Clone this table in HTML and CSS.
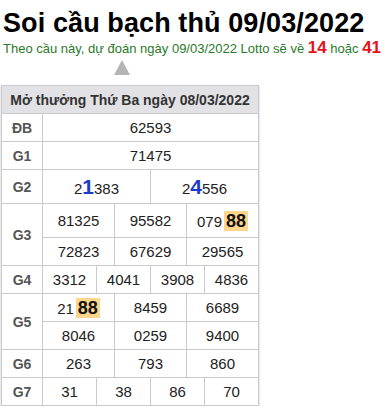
FILE: index.html
```html
<!DOCTYPE html>
<html lang="vi">
<head>
<meta charset="utf-8">
<link rel="stylesheet" href="styles.css">
</head>
<body>
<h1 class="title">Soi cầu bạch thủ 09/03/2022</h1>
<p class="predict">Theo cầu này, dự đoán ngày 09/03/2022 Lotto sẽ về <b class="num">14</b> hoặc <b class="num">41</b></p>
<div class="arrow-wrap"><span class="arrow"></span></div>
<table class="kq">
  <colgroup>
    <col class="c-label">
    <col class="c"><col class="c"><col class="c"><col class="c"><col class="c"><col class="c">
    <col class="c"><col class="c"><col class="c"><col class="c"><col class="c"><col class="c">
  </colgroup>
  <tr><th colspan="13" class="head">Mở thưởng Thứ Ba ngày 08/03/2022</th></tr>
  <tr><td class="lb">ĐB</td><td colspan="12">62593</td></tr>
  <tr><td class="lb">G1</td><td colspan="12">71475</td></tr>
  <tr class="tall"><td class="lb">G2</td><td colspan="6">2<b class="hl-b">1</b>383</td><td colspan="6">2<b class="hl-b">4</b>556</td></tr>
  <tr class="tall"><td class="lb" rowspan="2">G3</td><td colspan="4">81325</td><td colspan="4">95582</td><td colspan="4">079<b class="hl">88</b></td></tr>
  <tr><td colspan="4">72823</td><td colspan="4">67629</td><td colspan="4">29565</td></tr>
  <tr><td class="lb">G4</td><td colspan="3">3312</td><td colspan="3">4041</td><td colspan="3">3908</td><td colspan="3">4836</td></tr>
  <tr><td class="lb" rowspan="2">G5</td><td colspan="4">21<b class="hl">88</b></td><td colspan="4">8459</td><td colspan="4">6689</td></tr>
  <tr><td colspan="4">8046</td><td colspan="4">0259</td><td colspan="4">9400</td></tr>
  <tr><td class="lb">G6</td><td colspan="4">263</td><td colspan="4">793</td><td colspan="4">860</td></tr>
  <tr><td class="lb">G7</td><td colspan="3">31</td><td colspan="3">38</td><td colspan="3">86</td><td colspan="3">70</td></tr>
</table>
</body>
</html>
```
FILE: styles.css
```css
html, body {
  margin: 0;
  padding: 0;
  background: #fff;
}
body {
  font-family: "Liberation Sans", Arial, sans-serif;
  color: #222;
  padding: 0 1px;
}
.title {
  margin: 0;
  padding: 8px 0 0 2px;
  font-size: 27px;
  line-height: 30px;
  font-weight: bold;
  color: #000;
  letter-spacing: 0.1px;
}
.predict {
  margin: 0;
  padding-left: 2px;
  font-size: 13px;
  line-height: 20px;
  color: #2a7a2a;
}
.predict .num {
  color: #e0141e;
  font-size: 17px;
}
.arrow-wrap {
  width: 241px;
  display: flex;
  justify-content: center;
  align-items: flex-start;
  padding-top: 1px;
  height: 25px;
}
.arrow {
  width: 0;
  height: 0;
  border-left: 8px solid transparent;
  border-right: 8px solid transparent;
  border-bottom: 15px solid #b5b5b5;
}
.kq {
  border-collapse: collapse;
  table-layout: fixed;
  width: 258px;
  box-shadow: 0 1px 2px rgba(0,0,0,0.25);
}
.c-label { width: 41px; }
.c { width: 18px; }
.kq th, .kq td {
  border: 1px solid #c9c9cf;
  text-align: center;
  padding: 0;
  height: 27px;
  font-size: 15px;
  white-space: nowrap;
}
.kq .head {
  background: #e2e2e6;
  color: #333;
  font-size: 14px;
  font-weight: bold;
}
.kq .lb {
  font-weight: bold;
  color: #555;
  font-size: 14px;
}
.kq tr.tall td { height: 33px; }
.hl-b {
  color: #1a3ccc;
  font-size: 21px;
}
.hl {
  display: inline-block;
  background: #fdd68c;
  color: #111;
  font-size: 18px;
  line-height: 20px;
  padding: 0 2px;
  margin-left: 2px;
}
```
